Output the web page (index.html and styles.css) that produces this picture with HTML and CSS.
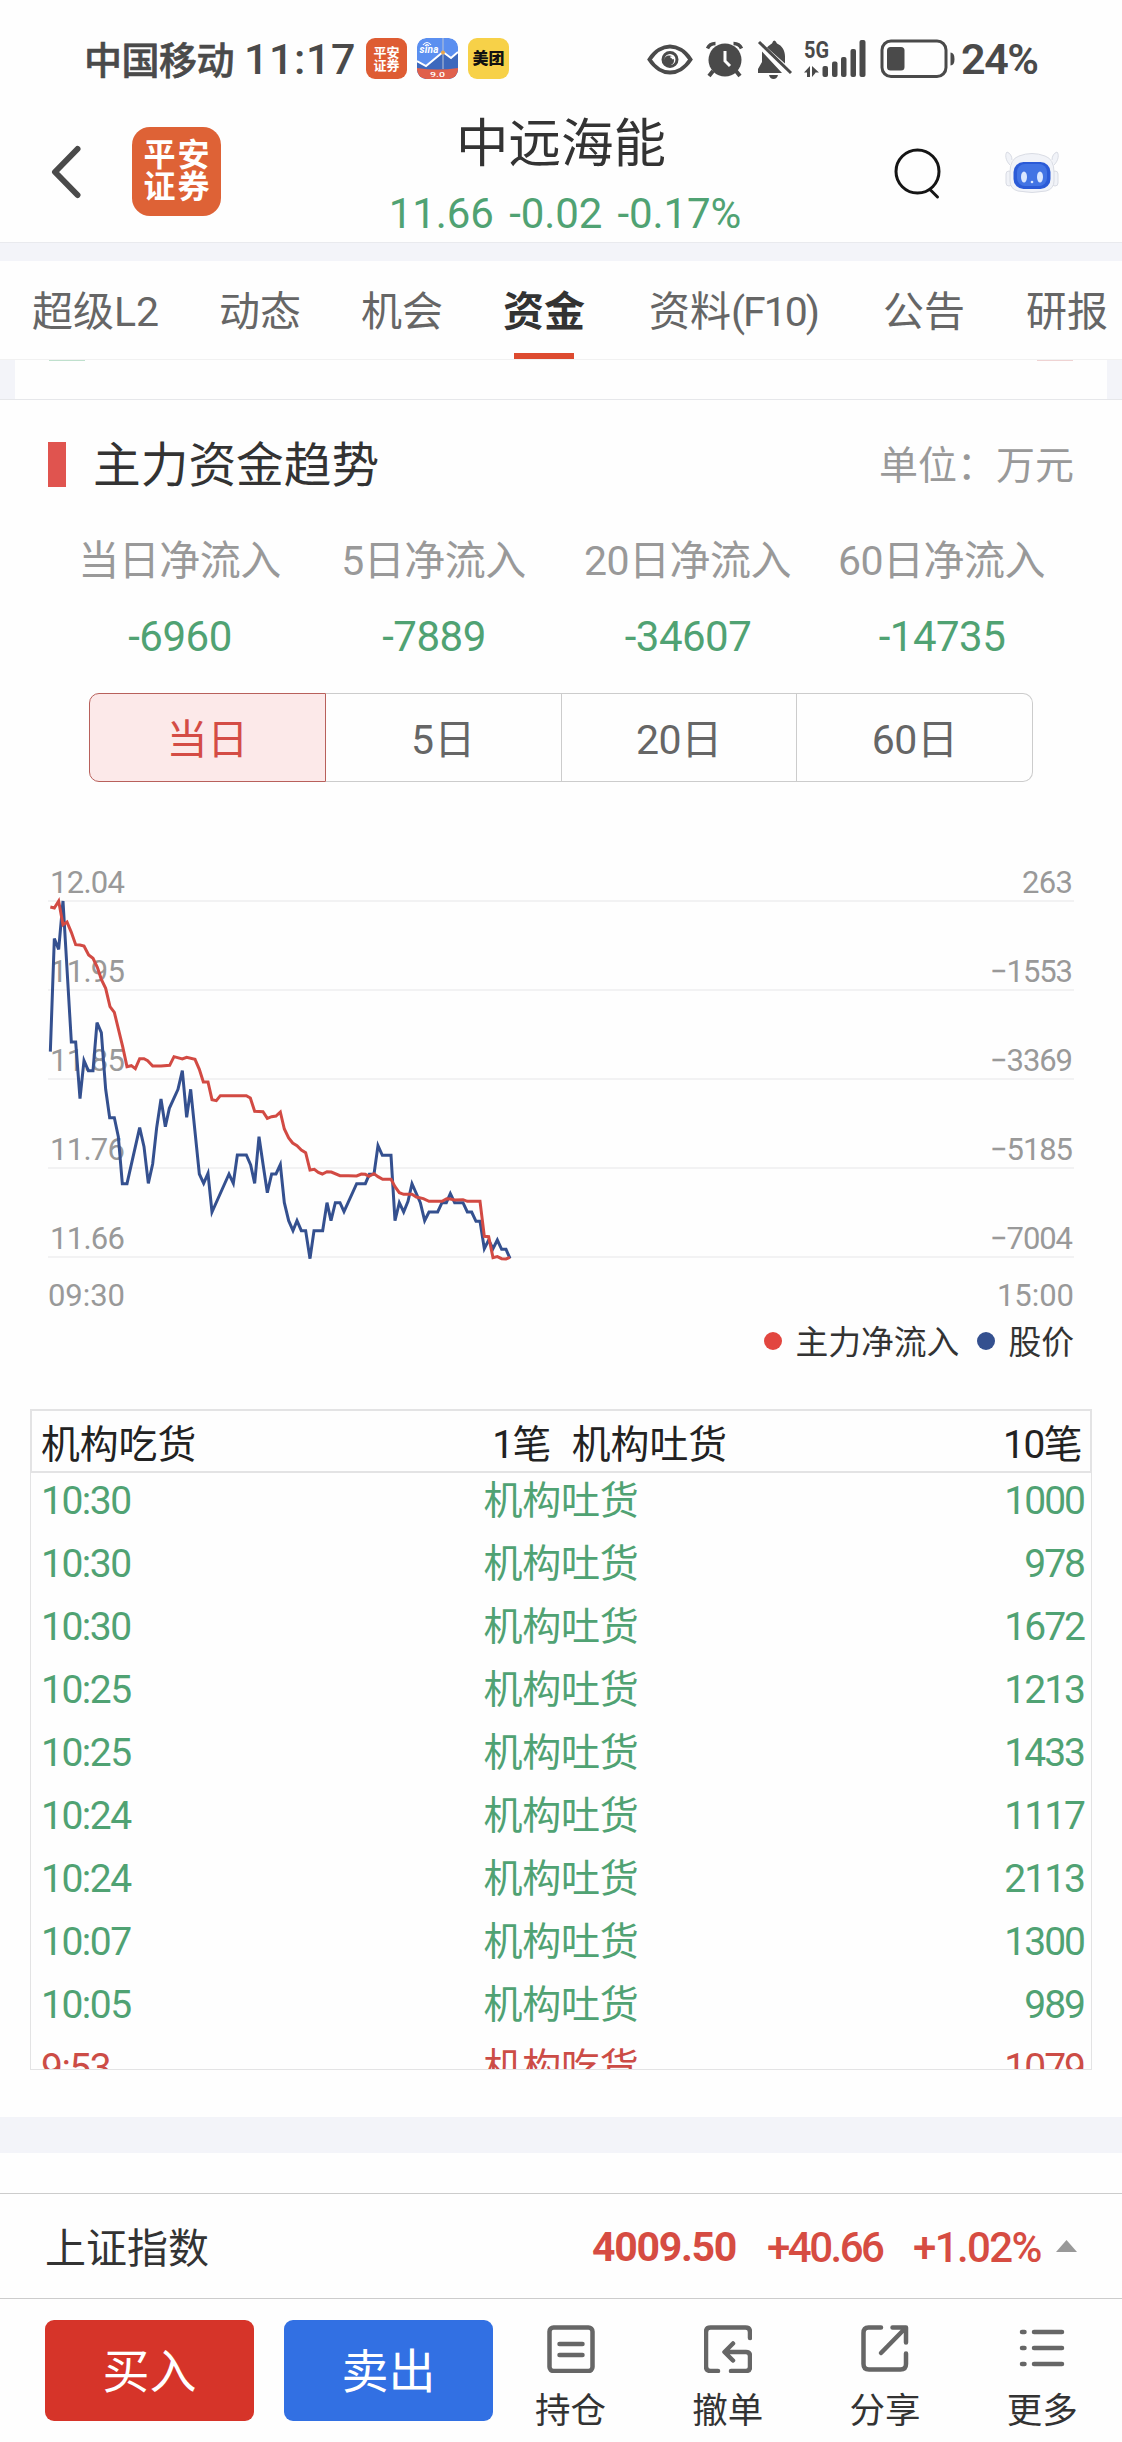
FILE: index.html
```html
<!DOCTYPE html>
<html lang="zh-CN">
<head>
<meta charset="utf-8">
<title>中远海能 - 资金</title>
<link rel="stylesheet" href="styles.css">
</head>
<body>
<div class="status">
  <span class="carrier">中国移动</span>
  <span class="clock">11:17</span>
  <div class="app app-pa"><span>平安</span><span>证券</span></div>
  <svg class="app app-sina" viewBox="0 0 41 41">
    <defs><clipPath id="r"><rect width="41" height="41" rx="9"/></clipPath></defs>
    <g clip-path="url(#r)">
      <rect width="41" height="41" fill="#5b8ff0"/>
      <path d="M0 24l9 4 17-13 8 5 7-6v27H0z" fill="#3d68bd"/>
      <path d="M26 0v31" stroke="#b9c3d6" stroke-width="1"/>
      <path d="M0 23l9 5 17-14 8 6 7-6" fill="none" stroke="#fff" stroke-width="2"/>
      <circle cx="26" cy="14.500" r="2" fill="#e8a64c"/>
      <path d="M0 30q20 3 41 0v11H0z" fill="#e0604c"/>
      <path d="M6 7q4-5 8 0M8 8q2-3 4 0" fill="none" stroke="#fff" stroke-width="1.200"/>
      <text x="2.500" y="14.500" class="sina" textLength="19">sina</text>
      <text x="13" y="38.500" class="ver" textLength="15" lengthAdjust="spacingAndGlyphs">9.0</text>
    </g>
  </svg>
  <div class="app app-mt">美团</div>
  <svg class="sys" viewBox="644 34 312 48" width="312" height="48">
    <g fill="none" stroke="#4a4a4a">
      <path d="M649.500 58.500C655 50 663 45.500 670 45.500S685 50 690.500 58.500C685 67 677 71.500 670 71.500S655 67 649.500 58.500Z" stroke-width="4"/>
      <circle cx="670" cy="58.500" r="7" stroke-width="3"/>
      <path d="M707.500 47.500q2-5 8-5M741.500 47.500q-2-5-8-5" stroke-width="3.500"/>
      <path d="M713 70l-4 5M736 70l4 5" stroke-width="4"/>
    </g>
    <g fill="#4a4a4a">
      <circle cx="669" cy="59.500" r="5"/>
      <circle cx="725" cy="59" r="16.500"/>
      <path d="M762 50.500V61l-4 7v4h24zM767 46.500c2-2 4-3.500 5-4q2-6 5 0c5 2 8 7 8 13v7zM769 74h9q-1 4-4.500 4t-4.500-4z"/>
      <path d="M804 71.500l6-6.500v11h-3v-4.500zM812 65l7 6.500h-3.500l-.5 1-3 3.500z"/>
      <rect x="822.500" y="65" width="5.500" height="11" rx="2"/>
      <rect x="832" y="60.500" width="5.500" height="15.500" rx="2"/>
      <rect x="841" y="56" width="5.500" height="20" rx="2"/>
      <rect x="850.500" y="48" width="5.500" height="28" rx="2"/>
      <rect x="859.500" y="39" width="6" height="37" rx="2"/>
      <rect x="887" y="46" width="17.500" height="23.500" rx="3.500"/>
      <path d="M950.500 51.500q4 0 4 6.500t-4 6.500z"/>
    </g>
    <path d="M725 50v10l5 5" fill="none" stroke="#fefefe" stroke-width="3"/>
    <path d="M670.500 56q2 0 3 2" fill="none" stroke="#fefefe" stroke-width="2"/>
    <path d="M759 41l32 31" stroke="#4a4a4a" stroke-width="3"/>
    <rect x="882" y="40" width="64" height="35.500" rx="9" fill="none" stroke="#4a4a4a" stroke-width="3"/>
    <text x="804" y="57" class="fiveg" textLength="25" lengthAdjust="spacingAndGlyphs">5G</text>
  </svg>
  <span class="batt">24%</span>
</div>

<header class="head">
  <svg class="back" viewBox="0 0 30 54"><path d="M26.500 4L4 27l22.500 23" fill="none" stroke="#4a4a4a" stroke-width="6" stroke-linecap="round" stroke-linejoin="round"/></svg>
  <div class="logo"><span>平安</span><span>证券</span></div>
  <div class="title">
    <h1>中远海能</h1>
    <p>11.66 -0.02 -0.17%</p>
  </div>
  <svg class="search" viewBox="0 0 50 54"><g fill="none" stroke="#151515" stroke-width="3" stroke-linecap="round"><circle cx="24.500" cy="24.500" r="21.500"/><path d="M37.500 43l7 7"/></g></svg>
  <svg class="bot" viewBox="0 0 54 44">
    <g fill="#f1f3f8" stroke="#d9dce4" stroke-width="1">
      <path d="M5 15C0 10 0 4 2 2c3 1 5 4 5 8M49 15c5-5 5-11 3-13-3 1-5 4-5 8"/>
      <rect x="1" y="21" width="6" height="15" rx="3"/><rect x="47" y="21" width="6" height="15" rx="3"/>
      <path d="M5 22Q5 9 14 6q13-5 26 0 9 3 9 16v9q0 8-8 10-14 3-28 0-8-2-8-10z"/>
    </g>
    <rect x="8.500" y="12" width="37" height="27" rx="10" fill="#2b5bd7"/>
    <rect x="12" y="14" width="30" height="22" rx="8" fill="#4274e4"/>
    <g fill="#dbe8ff"><ellipse cx="19" cy="27" rx="3" ry="5.500"/><ellipse cx="35" cy="27" rx="3" ry="5.500"/><circle cx="27" cy="32" r="1.300"/></g>
  </svg>
</header>

<div class="band"></div>
<nav class="tabs">
  <a>超级L2</a><a>动态</a><a>机会</a><a class="on">资金</a><a>资料<span>(F10)</span></a><a>公告</a><a>研报</a>
</nav>
<div class="strip"><i></i><i></i></div>

<section class="trend">
  <div class="sec-head"><b></b><h2>主力资金趋势</h2><span>单位：万元</span></div>
  <div class="flows">
    <div><label>当日净流入</label><em>-6960</em></div>
    <div><label>5日净流入</label><em>-7889</em></div>
    <div><label>20日净流入</label><em>-34607</em></div>
    <div><label>60日净流入</label><em>-14735</em></div>
  </div>
  <div class="seg"><button class="on">当日</button><button>5日</button><button>20日</button><button>60日</button></div>
  <svg class="chart" viewBox="0 0 1062 456" width="1062" height="456">
    <path d="M18 41H1044M18 130H1044M18 219H1044M18 308H1044M18 397H1044" stroke="#f2f2f3" stroke-width="2"/>
    <g class="axis">
      <text x="20" y="33" textLength="75">12.04</text><text x="20" y="122" textLength="75">11.95</text><text x="20" y="211" textLength="75">11.85</text><text x="20" y="299.500" textLength="75">11.76</text><text x="20" y="388.500" textLength="75">11.66</text><text x="18" y="445.500" textLength="77">09:30</text>
      <text x="992" y="33" textLength="51">263</text>
      <text x="960" y="122" textLength="83">−1553</text><text x="960" y="211" textLength="83">−3369</text><text x="960" y="299.500" textLength="83">−5185</text><text x="960" y="388.500" textLength="83">−7004</text><text x="967" y="445.500" textLength="77">15:00</text>
    </g>
    <g transform="scale(.33333)" fill="none" stroke-width="9" stroke-linejoin="miter">
      <polyline stroke="#34508f" points="61,575 73,236 86,268 99,123 124,546 137,546 150,716 162,602 175,632 189,632 201,488 214,518 227,688 239,773 253,773 265,830 277,971 291,971 329,803 342,860 355,970 368,912 380,803 393,717 406,800 418,745 444,688 457,632 470,772 482,688 495,815 508,942 521,970 534,940 546,1056 597,942 610,970 622,885 649,885 662,915 674,970 687,830 699,912 712,998 725,942 738,942 751,914 763,1028 776,1082 789,1112 801,1082 814,1112 827,1112 840,1196 852,1112 878,1112 891,1028 903,1082 916,1028 930,1028 942,1055 980,971 1006,971 1018,943 1032,943 1044,857 1057,886 1083,886 1095,1082 1108,1028 1121,1056 1134,1024 1146,971 1171,1028 1184,1082 1197,1056 1223,1056 1236,1028 1249,1028 1261,1001 1274,1028 1299,1028 1312,1056 1325,1056 1338,1084 1350,1084 1363,1166 1376,1140 1389,1166 1402,1140 1415,1168 1428,1168 1440,1195"/>
      <polyline stroke="#d24a43" points="61,141 73,144 86,123 99,194 111,186 124,217 137,254 150,255 162,258 176,285 189,295 202,322 214,358 227,385 240,440 253,457 278,560 291,620 304,617 316,626 329,596 342,596 353,602 368,618 393,618 419,616 432,590 457,597 470,592 495,598 508,628 520,666 534,666 546,719 559,722 571,707 649,707 661,714 674,754 699,755 712,775 725,770 738,768 751,756 763,807 776,834 788,849 801,857 814,870 827,878 840,930 853,928 865,937 877,942 891,935 904,936 930,947 955,947 980,948 994,942 1006,943 1017,949 1032,941 1044,950 1058,958 1083,958 1095,980 1108,998 1121,1003 1146,1003 1159,1011 1180,1016 1197,1024 1236,1024 1250,1016 1261,1017 1274,1020 1299,1019 1312,1024 1350,1024 1363,1129 1376,1130 1389,1193 1402,1190 1415,1196 1428,1197 1440,1192"/>
    </g>
  </svg>
  <div class="legend"><i class="r"></i><span>主力净流入</span><i class="b"></i><span>股价</span></div>
</section>

<section class="deals">
  <div class="deals-head"><span>机构吃货</span><span>1笔</span><span>机构吐货</span><span>10笔</span></div>
  <div class="rows">
    <div><span>10:30</span><span>机构吐货</span><span>1000</span></div>
    <div><span>10:30</span><span>机构吐货</span><span>978</span></div>
    <div><span>10:30</span><span>机构吐货</span><span>1672</span></div>
    <div><span>10:25</span><span>机构吐货</span><span>1213</span></div>
    <div><span>10:25</span><span>机构吐货</span><span>1433</span></div>
    <div><span>10:24</span><span>机构吐货</span><span>1117</span></div>
    <div><span>10:24</span><span>机构吐货</span><span>2113</span></div>
    <div><span>10:07</span><span>机构吐货</span><span>1300</span></div>
    <div><span>10:05</span><span>机构吐货</span><span>989</span></div>
    <div class="buy"><span>9:53</span><span>机构吃货</span><span>1079</span></div>
  </div>
</section>
<div class="band wide"></div>

<div class="index">
  <span class="name">上证指数</span><b>4009.50</b><span class="chg">+40.66</span><span class="pct">+1.02%</span>
  <svg viewBox="0 0 21 12" width="21" height="12"><path d="M0 12L10.500 0 21 12z" fill="#999"/></svg>
</div>
<footer class="bar">
  <button class="buy-btn">买入</button><button class="sell-btn">卖出</button>
  <div class="acts">
    <div><svg viewBox="0 0 48 48"><rect x="2.500" y="2.500" width="43" height="43.500" rx="4"/><path d="M12.500 19h23M12.500 30h23"/></svg><span>持仓</span></div>
    <div><svg viewBox="0 0 48 48"><path d="M46 13V7q0-4.500-4.500-4.500H6.500Q2 2.500 2 7v34.500Q2 46 6.500 46H14M27 46h15q4 0 4-4V31q0-4-4-4H21M29 18.500L20.500 27l8.500 8.500"/></svg><span>撤单</span></div>
    <div><svg viewBox="0 0 48 48"><path d="M20 2.500H7.500Q2.500 2.500 2.500 8v31q0 5.500 5.500 5.500h31.500q5.500 0 5.500-5.500V28.500M31.500 2.500H45V17.500M44 3.500L20 28"/></svg><span>分享</span></div>
    <div><svg viewBox="0 0 48 48"><path d="M4 7h2.500M16 7h28M4 23h2.500M16 23h28M4 39h2.500M16 39h28"/></svg><span>更多</span></div>
  </div>
</footer>
</body>
</html>
```
FILE: styles.css
```css
* { box-sizing: border-box; margin: 0; padding: 0; }
body {
  width: 1122px; height: 2442px; overflow: hidden; background: #fefefe; color: #333;
  font-family: Roboto, "Noto Sans CJK SC", sans-serif; display: flex; flex-direction: column;
}
h1, h2, em { font-weight: 400; font-style: normal; }
button { font: inherit; border: 0; background: none; }
svg, span, i { flex: none; }

.status { height: 117px; padding-left: 84px; display: flex; align-items: center; color: #4a4a4a; }
.carrier { font-size: 38px; font-weight: 500; width: 160px; letter-spacing: -.5px; padding-bottom: 3px; -webkit-text-stroke: .6px #4a4a4a; }
.clock { font-size: 43px; font-weight: 500; width: 122px; letter-spacing: .6px; }
.app { width: 41px; height: 41px; border-radius: 9px; margin-right: 10px; flex: none; }
.app-pa { background: #de5c33; color: #fff; font-size: 13px; font-weight: 700; line-height: 13px; display: flex; flex-direction: column; align-items: center; justify-content: center; }
.app-mt { background: #f7d148; color: #111; font-size: 16px; font-weight: 900; line-height: 41px; text-align: center; }
.sina { font: italic 700 10px Roboto, sans-serif; fill: #fff; }
.ver { font: 500 8px Roboto, sans-serif; fill: #fff; }
.fiveg { font: 700 24px Roboto, sans-serif; fill: #4a4a4a; }
.sys { margin-left: 125px; }
.batt { font-size: 43px; font-weight: 600; margin-left: 5px; letter-spacing: -1.400px; }

.head { height: 125px; display: flex; align-items: flex-start; }
.back { width: 30px; height: 54px; margin: 28px 0 0 51px; }
.logo { width: 89px; height: 89px; margin: 10px 0 0 51px; border-radius: 18px; background: #de6236; color: #fff; font-size: 32px; letter-spacing: 2px; padding: 0 0 1px 2px; font-weight: 700; line-height: 32px; display: flex; flex-direction: column; align-items: center; justify-content: center; flex: none; }
.logo span { height: 32px; }
.title { width: 680px; height: 125px; text-align: center; }
.title h1 { font-size: 52.500px; line-height: 54px; }
.title p { font-size: 42px; line-height: 50px; margin-top: 18px; color: #50a273; padding-left: 8px; word-spacing: 5px; letter-spacing: -.1px; }
.search { width: 50px; height: 54px; margin: 30px 0 0 -8px; }
.bot { width: 54px; height: 44px; margin: 33px 0 0 62px; }

.band { height: 19px; background: #f3f4f9; border-top: 1px solid #e9eaee; flex: none; }
.tabs { height: 99px; padding-left: 32px; display: grid; grid-template-columns: 187px 142px 142px 146px 234px 143px 96px; line-height: 103px; font-size: 41px; color: #666; border-bottom: 1px solid #f1f1f1; flex: none; white-space: nowrap; }
.tabs a { height: 98px; }
.tabs a span { letter-spacing: -2px; }
.tabs .on { font-weight: 700; color: #333; width: 82px; background: linear-gradient(#dd4a2f, #dd4a2f) no-repeat 11px 100% / 60px 6px; }
.strip { height: 40px; border: solid #f3f4f9; border-width: 0 15px; display: flex; justify-content: space-between; padding: 0 34px; flex: none; }
.strip i { width: 36px; height: 1px; background: #bfe0cd; }
.strip i:last-child { background: #efd3d3; }

.trend { height: 1007px; flex: none; display: flex; flex-direction: column; border-top: 1px solid #e6e7ea; margin-top: -1px; }
.sec-head { height: 131px; padding: 0 48px; display: flex; align-items: center; flex: none; }
.sec-head b { width: 18px; height: 45px; background: #e0544f; margin-right: 27px; margin-bottom: 3px; }
.sec-head h2 { font-size: 47.700px; flex: 1; line-height: 60px; }
.sec-head span { font-size: 39px; color: #999; line-height: 50px; }
.flows { margin: 0 53px; display: grid; grid-template-columns: repeat(4, 1fr); text-align: center; font-size: 41px; color: #999; flex: none; }
.flows label, .flows em { display: block; line-height: 60px; white-space: nowrap; }
.flows label { letter-spacing: -.5px; margin-left: -1px; }
.flows em { font-size: 42px; color: #50a273; margin-top: 16px; letter-spacing: -.5px; }
.seg { height: 89px; width: 944px; margin: 26px 0 0 89px; display: flex; flex: none; }
.seg button { flex: 1; border: 1px solid #ccc; border-left-width: 0; font-size: 41px; line-height: 87px; padding-top: 3px; color: #666; height: 89px; }
.seg button:nth-child(n+3) { letter-spacing: -.5px; }
.seg button:last-child { border-radius: 0 10px 10px 0; }
.seg .on { border: 1px solid #b8605b; border-radius: 10px 0 0 10px; background: #fce9e9; color: #d44c45; }
.chart { margin: 78px 0 0 30px; display: block; }
.axis { font-size: 31px; fill: #999; }
.legend { height: 50px; padding: 0 48px 3px; display: flex; align-items: center; justify-content: flex-end; font-size: 32.800px; }
.legend i { width: 18px; height: 18px; border-radius: 50%; margin-right: 13px; margin-top: 2px; }
.legend .r { background: #e2463f; }
.legend .b { background: #34508f; margin-left: 18px; }

.deals { margin: 3px 30px 0; height: 661px; flex: none; }
.deals-head { height: 64px; border: 2px solid #e3e3e4; display: flex; font-size: 38.800px; line-height: 67px; padding: 0 9px; color: #222; }
.deals-head span:nth-child(2) { flex: 1; text-align: right; letter-spacing: -1.500px; }
.deals-head span:nth-child(3) { margin-left: 22px; }
.deals-head span:nth-child(4) { width: 354px; text-align: right; letter-spacing: -1.500px; }
.rows { height: 597px; overflow: hidden; border: 1px solid #e3e3e4; border-top: 0; }
.rows > div { height: 63px; line-height: 63px; padding: 0 7px 0 10px; display: grid; grid-template-columns: 1fr 162px 1fr; font-size: 39px; color: #50a273; position: relative; top: -3px; }
.rows span:nth-child(2) { text-align: center; letter-spacing: -.3px; margin-left: -3px; }
.rows span:nth-child(3) { text-align: right; letter-spacing: -2px; }
.rows span:nth-child(1) { letter-spacing: -1.500px; }
.rows .buy { color: #cc4c46; }
.band.wide { margin-top: 47px; height: 36px; border: 0; }

.index { margin-top: 40px; height: 106px; border: solid #ccc; border-width: 1px 0; flex: none; display: flex; align-items: center; padding-left: 45px; font-size: 41px; color: #d64c42; }
.index .name { width: 547px; color: #333; padding-bottom: 2px; }
.index b, .index .chg, .index .pct { padding-top: 2px; }
.index b { width: 175px; letter-spacing: -1.300px; }
.index .chg { width: 146px; font-weight: 500; font-size: 42px; letter-spacing: -2.500px; }
.index .pct { width: 143px; font-weight: 500; font-size: 42px; letter-spacing: -1.600px; }
.bar { flex: 1; display: flex; padding: 21px 0 0 45px; }
.bar button { width: 209px; height: 101px; border-radius: 9px; color: #fff; font-size: 47px; line-height: 101px; margin-right: 30px; flex: none; padding-top: 1px; }
.buy-btn { background: #d63429; }
.bar .sell-btn { background: #3270e3; margin-right: 0; }
.acts { flex: 1; display: grid; grid-template-columns: repeat(4, 1fr); padding-top: 5px; margin-left: -1px; margin-right: 1px; }
.acts div { display: flex; flex-direction: column; align-items: center; font-size: 35.500px; }
.acts svg { width: 48px; height: 48px; fill: none; stroke: #666; stroke-width: 4.500; stroke-linecap: round; stroke-linejoin: round; }
.acts span { line-height: 50px; margin-top: 13px; }
```
